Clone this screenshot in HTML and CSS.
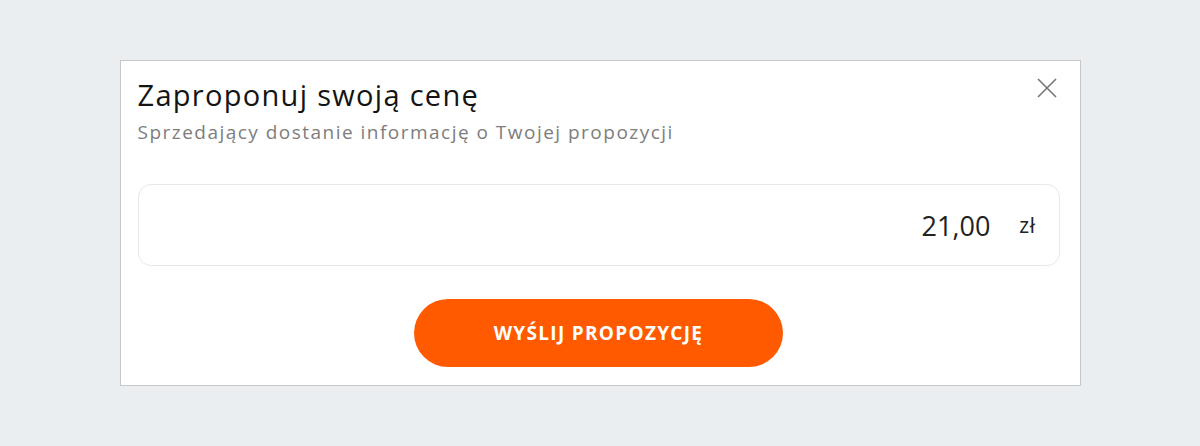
FILE: index.html
```html
<!DOCTYPE html>
<html lang="pl">
<head>
<meta charset="utf-8">
<link rel="stylesheet" href="styles.css">
</head>
<body>
<div class="page">
  <div class="modal">
    <button class="close" aria-label="Zamknij">
      <svg width="22" height="22" viewBox="0 0 22 22"><path d="M2 2L20 20M20 2L2 20" stroke="#757575" stroke-width="1.6" fill="none"/></svg>
    </button>
    <h1 class="title">Zaproponuj swoją cenę</h1>
    <p class="subtitle">Sprzedający dostanie informację o Twojej propozycji</p>
    <div class="field">
      <span class="value">21,00</span>
      <span class="currency">zł</span>
    </div>
    <div class="actions">
      <button class="submit">WYŚLIJ PROPOZYCJĘ</button>
    </div>
  </div>
</div>
</body>
</html>
```
FILE: styles.css
```css
html, body {
  margin: 0;
  padding: 0;
}
body {
  background: #eaeef1;
  font-family: "Open Sans", "Noto Sans", sans-serif;
  width: 1200px;
  height: 446px;
  overflow: hidden;
}
.page {
  padding-top: 60px;
  display: flex;
  justify-content: center;
}
.modal {
  position: relative;
  box-sizing: border-box;
  width: 961px;
  height: 326px;
  background: #fff;
  border: 1px solid #c5c7c9;
  padding: 15px 20px 0 17px;
}
.close {
  position: absolute;
  top: 16px;
  right: 22px;
  background: none;
  border: 0;
  padding: 0;
  width: 22px;
  height: 22px;
  cursor: pointer;
}
.title {
  margin: 0;
  font-size: 29px;
  font-weight: 400;
  line-height: 38px;
  letter-spacing: 1.3px;
  color: #141414;
}
.subtitle {
  margin: 5px 0 0;
  font-size: 19px;
  line-height: 26px;
  letter-spacing: 1.48px;
  color: #7d7d7d;
}
.field {
  margin-top: 39px;
  box-sizing: border-box;
  height: 82px;
  border: 1px solid #e8e8e8;
  border-radius: 13px;
  display: flex;
  align-items: center;
  justify-content: flex-end;
  padding: 0 23px 0 20px;
  color: #222;
}
.value {
  font-size: 27px;
  margin-right: 29px;
}
.currency {
  font-size: 21px;
  letter-spacing: 0.5px;
}
.actions {
  display: flex;
  justify-content: center;
  margin-top: 33px;
}
.submit {
  width: 369px;
  height: 68px;
  border: 0;
  border-radius: 34px;
  background: #ff5a00;
  color: #fff;
  font-family: "Open Sans", "Noto Sans", sans-serif;
  font-weight: 700;
  font-size: 19px;
  letter-spacing: 1.3px;
}
```
